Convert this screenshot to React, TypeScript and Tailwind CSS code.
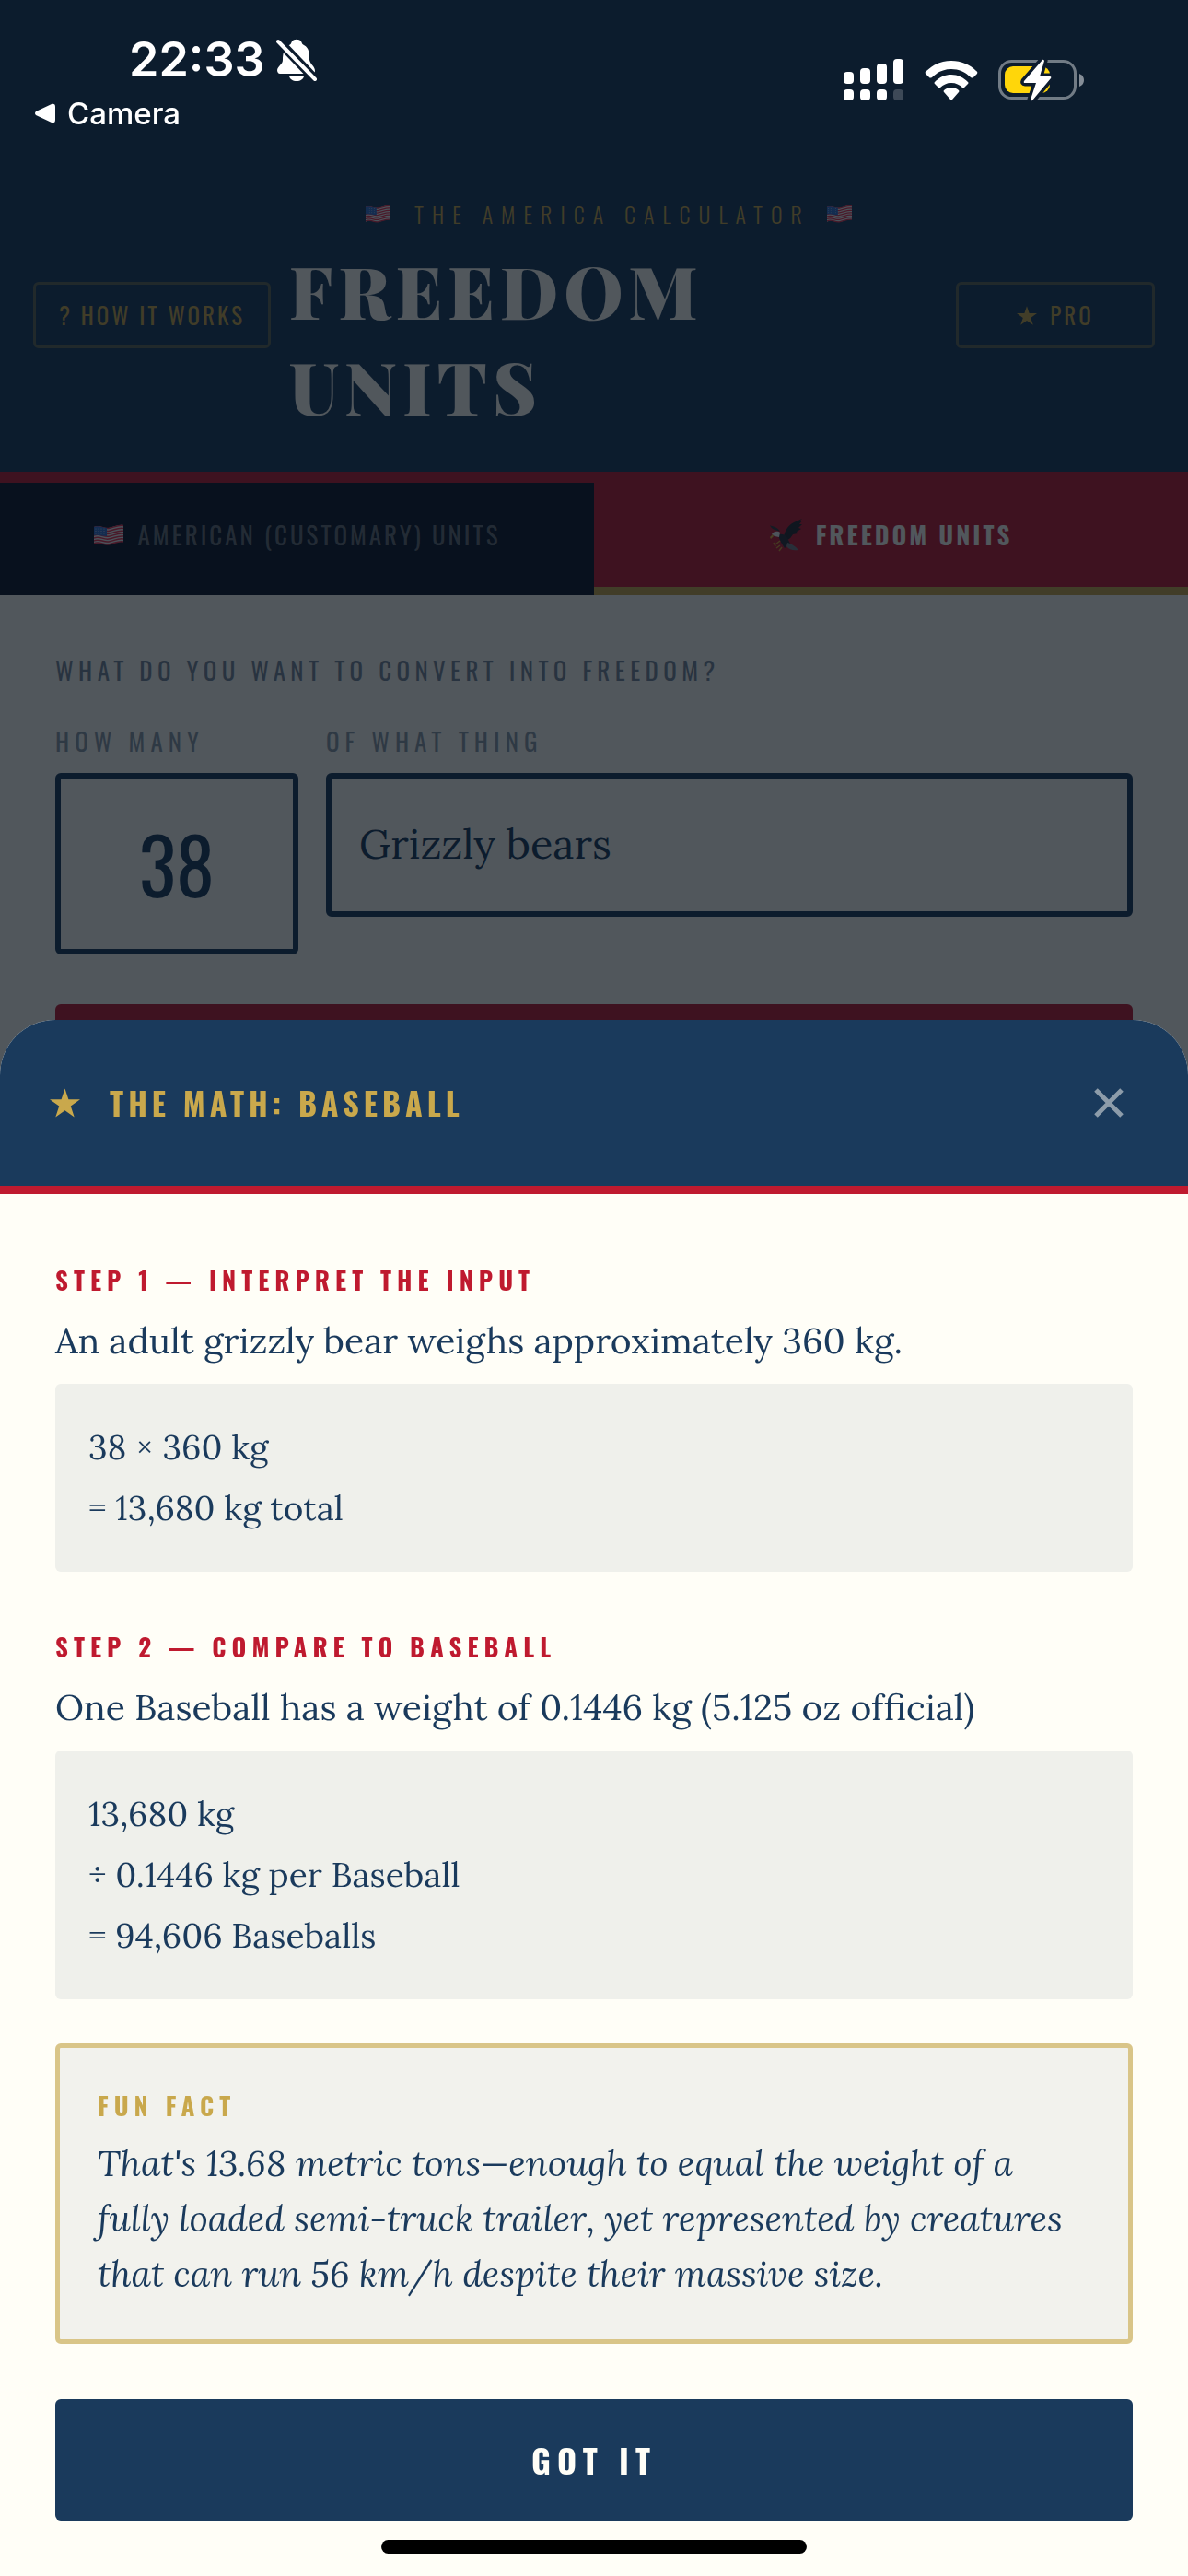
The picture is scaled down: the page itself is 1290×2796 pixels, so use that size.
import { useState } from "react";

const steps = [
  {
    title: "Step 1 — Interpret the input",
    text: "An adult grizzly bear weighs approximately 360 kg.",
    math: ["38 × 360 kg", "= 13,680 kg total"],
  },
  {
    title: "Step 2 — Compare to Baseball",
    text: "One Baseball has a weight of 0.1446 kg (5.125 oz official)",
    math: ["13,680 kg", "÷ 0.1446 kg per Baseball", "= 94,606 Baseballs"],
  },
];

function Flag({ className }: { className: string }) {
  const wave = (y: number) => `M0 ${y}c6-3 10 2 16 1s10-4 16-3`;
  return (
    <svg viewBox="0 0 32 23" className={className} aria-hidden="true">
      <path d="M0 3c6-3 10 2 16 1s10-4 16-3v18c-6-1-10 2-16 3S6 18 0 22z" fill="#eceff1" />
      <g fill="none" stroke="#e5304f" strokeWidth="1.5">
        {[3.5, 6.4, 9.3, 12.2, 15.1, 18, 20.9].map((y) => (
          <path key={y} d={wave(y)} />
        ))}
      </g>
      <path d="M0 3c5-2 9 1 14 1v9c-5 0-9-2-14-1z" fill="#2f6fd0" />
      <g fill="#dbe7f7">
        {[5, 7.5, 10].map((y) =>
          [2, 5, 8, 11].map((x) => <circle key={`${x}-${y}`} cx={x} cy={y} r=".5" />)
        )}
      </g>
    </svg>
  );
}

function Eagle() {
  return (
    <svg viewBox="0 0 36 36" className="h-9 w-9" aria-hidden="true">
      <path d="M11 14C8 12 2 13 0 7c3 2 8 1 11 7z" fill="#33363f" />
      <path d="M15 20c1-7 5-13 11-16l9-4-3 3 3-1-3 4 3 0-4 4 3 1-5 3 1 2-5 1c-2 3-3 5-6 6z" fill="#22252e" />
      <path d="M9 17c4-1 8 0 10 4l3 6-6 5c-2-3-6-9-7-15z" fill="#2b2e37" />
      <path d="M19 26c4 1 9 4 12 8-5 1-10 0-13-4z" fill="#777b83" />
      <path d="M2 17c2-4 7-4 9-2l-1 5-5-1z" fill="#f2f3f5" />
      <path d="M3 17l-3 3 1 2 3-3z" fill="#e8b23a" />
      <path d="M11 24l-5 4m5 1l-4 3m6-1l-3 4M4 26l2 4" stroke="#d99a35" strokeWidth="1.5" fill="none" />
    </svg>
  );
}

function Star({ className }: { className: string }) {
  return (
    <svg viewBox="0 0 32 30" className={className} fill="currentColor" aria-hidden="true">
      <path d="M16 0l3.8 11.4H32l-9.9 7.1L25.9 30 16 23l-9.9 7 3.8-11.5L0 11.4h12.2z" />
    </svg>
  );
}

function StatusBar() {
  return (
    <div className="flex items-start justify-between pl-[38px] pr-[112px] pt-[33px] font-[Inter,sans-serif] text-white">
      <div>
        <div className="flex items-center gap-[12px] pl-[102px]">
          <span className="text-[52px] font-semibold leading-[64px]">22:33</span>
          <svg viewBox="0 0 44 46" className="h-[46px] w-[44px]" aria-hidden="true">
            <g fill="#fff">
              <path d="M14 7c2-1 2-2 3-4 2-3 8-3 10 0 1 2 1 3 3 4 6 3 6 10 6 16 1 5 6 7 6 12 0 2-1 3-3 3H4c-2 0-3-2-3-4 1-5 6-6 6-11 0-6 1-13 7-16z" />
              <path d="M12 40h20c-1 4-5 6-10 6s-9-2-10-6z" transform="translate(4 0) scale(.82 1)" />
            </g>
            <path d="M1 1l42 44" stroke="#0d1c2e" strokeWidth="10" />
            <path d="M2 3l40 41" stroke="#fff" strokeWidth="4" strokeLinecap="round" />
          </svg>
        </div>
        <a href="#camera" className="flex items-center gap-[13px] text-[33px] font-medium leading-[52px]">
          <svg viewBox="0 0 22 22" className="h-[22px] w-[22px]" fill="#fff" aria-hidden="true">
            <path d="M1 9L18 1q4-1 4 3v14q0 4-4 3L1 13q-2-2 0-4z" />
          </svg>
          Camera
        </a>
      </div>
      <div className="flex items-center gap-[22px] pt-[31px]">
        <svg viewBox="0 0 66 46" className="h-[46px] w-[66px]" fill="#fff" aria-hidden="true">
          <rect x="0" y="14" width="11" height="13" rx="4" />
          <rect x="18" y="10" width="11" height="17" rx="4" />
          <rect x="36" y="5" width="11" height="22" rx="4" />
          <rect x="54" y="0" width="11" height="27" rx="4" />
          <rect x="0" y="33" width="11" height="12" rx="4" />
          <rect x="18" y="33" width="11" height="12" rx="4" />
          <rect x="36" y="33" width="11" height="12" rx="4" />
          <rect x="54" y="33" width="11" height="12" rx="4" opacity=".2" />
        </svg>
        <svg viewBox="0 0 58 44" className="h-[44px] w-[58px]" fill="#fff" aria-hidden="true">
          <path d="M29 1c11 0 20 4 27 11q2 1 1 3l-4 4q-1 1-3 0C44 13 37 10 29 10S14 13 8 19q-2 1-3 0l-4-4q-1-2 1-3C9 5 18 1 29 1z" />
          <path d="M29 16c7 0 13 3 18 8q1 1 0 2l-4 4q-1 1-2 0c-3-3-7-5-12-5s-9 2-12 5q-1 1-2 0l-4-4q-1-1 0-2c5-5 11-8 18-8z" />
          <path d="M29 30c3 0 6 1 8 3q1 1 0 2l-7 8q-1 1-2 0l-7-8q-1-1 0-2c2-2 5-3 8-3z" />
        </svg>
        <svg viewBox="0 0 94 46" className="h-[46px] w-[94px]" aria-hidden="true">
          <rect x="1.5" y="2.5" width="82" height="40" rx="13" fill="none" stroke="#fff" strokeOpacity=".42" strokeWidth="3" />
          <path d="M88 16q5 2 5 7t-5 7z" fill="#fff" fillOpacity=".5" />
          <rect x="7" y="8" width="49" height="29" rx="9" fill="#ffd60a" />
          <path
            d="M48 1L28 24q-1 2 1 2h12l-6 18q0 2 2 1l20-24q1-2-1-2H45L50 2q-1-2-2-1z"
            fill="#fff"
            stroke="#0d1c2e"
            strokeWidth="7"
            paintOrder="stroke"
          />
        </svg>
      </div>
    </div>
  );
}

function ConverterPage() {
  const [tab, setTab] = useState("freedom");

  return (
    <div className="font-[Oswald,'Roboto_Condensed',sans-serif] text-[#1a3a5c]">
      <header className="border-b-[12px] border-[#bf1a2f] bg-[#1a3a5c] px-9 pb-[41px] pt-[209px]">
        <p className="flex items-center justify-center gap-[26px] pl-8 text-[24px] font-light uppercase leading-[46px] tracking-[9px] text-[#c9a84c]">
          <Flag className="h-5 w-[27px]" />
          The America Calculator
          <Flag className="-ml-2 h-5 w-[27px]" />
        </p>
        <div className="flex items-start gap-5 pt-2">
          <button className="mt-[43px] h-[72px] w-[258px] shrink-0 rounded-md border-[3px] border-[#c9a84c]/40 text-[25px] uppercase tracking-[3px] text-[#c9a84c]">
            ? How it works
          </button>
          <h1 className="grow font-['Playfair_Display','DejaVu_Serif',serif] text-[78px] font-black uppercase leading-[104px] tracking-[6px] text-[#fffef7]">
            Freedom
            <br />
            Units
          </h1>
          <button className="mt-[43px] flex h-[72px] w-[216px] shrink-0 items-center justify-center gap-[14px] rounded-md border-[3px] border-[#c9a84c]/40 text-[25px] uppercase tracking-[3px] text-[#c9a84c]">
            <Star className="h-[21px] w-[22px]" />
            Pro
          </button>
        </div>
      </header>

      <nav className="grid h-[122px] grid-cols-2 text-[27px] tracking-[3px]">
        <button
          onClick={() => setTab("american")}
          aria-pressed={tab === "american"}
          className="flex items-center justify-center gap-4 border-b-[9px] border-[#0a1628] bg-[#0a1628] uppercase text-[#fffef7]/40"
        >
          <Flag className="h-[23px] w-8" />
          American (Customary) Units
        </button>
        <button
          onClick={() => setTab("freedom")}
          aria-pressed={tab === "freedom"}
          className="flex items-center justify-center gap-[14px] border-b-[9px] border-[#c9a84c] bg-[#bf1a2f] font-bold uppercase text-[#fffef7]"
        >
          <Eagle />
          Freedom Units
        </button>
      </nav>

      <main className="px-[60px] pt-[54px]">
        <p className="text-[27px] uppercase leading-[54px] tracking-[0.2em] opacity-60">
          What do you want to convert into freedom?
        </p>
        <div className="flex items-start gap-[30px] pt-6">
          <label className="w-[264px] shrink-0">
            <span className="block text-[27px] uppercase leading-[52px] tracking-[6px] opacity-50">
              How many
            </span>
            <input
              defaultValue="38"
              inputMode="numeric"
              className="mt-[9px] block h-[197px] w-full rounded-md border-[6px] border-[#1a3a5c] bg-transparent pb-[3px] text-center text-[84px]"
            />
          </label>
          <label className="grow">
            <span className="block text-[27px] uppercase leading-[52px] tracking-[6px] opacity-50">
              Of what thing
            </span>
            <input
              defaultValue="Grizzly bears"
              className="mt-[9px] block h-[156px] w-full rounded-md border-[6px] border-[#1a3a5c] bg-transparent px-[30px] pb-[3px] font-[Lora,'DejaVu_Serif',serif] text-[45px]"
            />
          </label>
        </div>
        <button className="mt-[54px] block h-[150px] w-full rounded-md bg-[#bf1a2f]" aria-label="Convert" />
      </main>
    </div>
  );
}

function MathSheet() {
  return (
    <section
      role="dialog"
      aria-label="The Math: Baseball"
      className="overflow-hidden rounded-t-[60px] bg-[#fffef7] font-[Lora,'DejaVu_Serif',serif] text-[39px] text-[#1a3a5c]"
    >
      <div className="flex items-center justify-between border-b-[9px] border-[#bf1a2f] bg-[#1a3a5c] py-[60px] pl-[54px] pr-14">
        <h2 className="flex items-center gap-8 font-[Oswald,'Roboto_Condensed',sans-serif] text-[34px] font-bold uppercase leading-[60px] tracking-[5px] text-[#c9a84c]">
          <Star className="h-8 w-[33px]" />
          The Math: Baseball
        </h2>
        <button aria-label="Close" className="p-[14px] text-[#fffef7]/50">
          <svg viewBox="0 0 32 32" className="h-8 w-8" aria-hidden="true">
            <path d="M2 2l28 28M30 2L2 30" stroke="currentColor" strokeWidth="5" />
          </svg>
        </button>
      </div>

      <div className="px-[60px] pt-[66px]">
        <div className="flex flex-col gap-[54px]">
          {steps.map((step) => (
            <div key={step.title}>
              <h3 className="font-[Oswald,'Roboto_Condensed',sans-serif] text-[27px] font-bold uppercase leading-[54px] tracking-[6px] text-[#bf1a2f]">
                {step.title}
              </h3>
              <p className="pt-[6px] leading-[66px]">{step.text}</p>
              <div className="mt-[14px] rounded-md bg-[#1a3a5c]/7 p-9 text-[37px] leading-[66px]">
                {step.math.map((line) => (
                  <p key={line}>{line}</p>
                ))}
              </div>
            </div>
          ))}
        </div>

        <div className="mt-12 rounded-md border-[5px] border-[#d9c588] bg-[#1a3a5c]/6 px-[41px] pb-[41px] pt-[35px]">
          <h3 className="font-[Oswald,'Roboto_Condensed',sans-serif] text-[27px] font-bold uppercase leading-[54px] tracking-[6px] text-[#c9a84c]">
            Fun Fact
          </h3>
          <p className="pt-[6px] italic leading-[60px]">
            That's 13.68 metric tons—enough to equal the weight of a fully loaded semi-truck trailer, yet
            represented by creatures that can run 56 km/h despite their massive size.
          </p>
        </div>

        <button className="mt-[60px] h-[132px] w-full rounded-md bg-[#1a3a5c] font-[Oswald,'Roboto_Condensed',sans-serif] text-[36px] font-bold uppercase tracking-[7px] text-[#fffef7]">
          Got it
        </button>
      </div>
      <div className="mx-auto mb-6 mt-[21px] h-[15px] w-[462px] rounded-full bg-black" />
    </section>
  );
}

export default function App() {
  return (
    <div className="min-h-screen bg-[#fffef7]">
      <ConverterPage />
      <div className="fixed inset-0 flex flex-col justify-between bg-[#070f1a]/70">
        <StatusBar />
        <MathSheet />
      </div>
    </div>
  );
}
